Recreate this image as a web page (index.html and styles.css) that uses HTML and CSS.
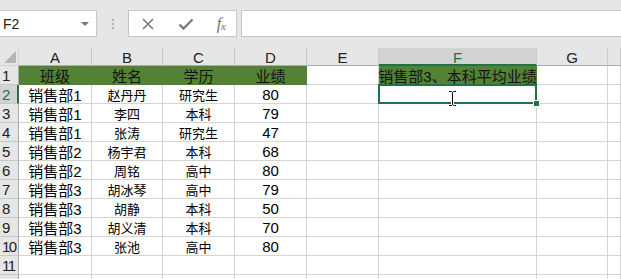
FILE: index.html
```html
<!DOCTYPE html>
<html>
  <head>
    <title>Sheet1</title>
    <meta charset="utf-8">
    <link rel="stylesheet" href="styles.css">
  </head>
  <body>
    <div class="formula-bar">
      <div class="name-box">
        <span>F2</span>
        <span class="caret"></span>
      </div>
      <div class="grip"><i></i><i></i><i></i></div>
      <div class="fx-buttons">
        <svg class="btn" width="14" height="14" viewBox="0 0 14 14">
          <path d="M2 2 L12 12 M12 2 L2 12" stroke="#7b7b7b" stroke-width="1.6" fill="none"/>
        </svg>
        <svg class="btn" width="16" height="14" viewBox="0 0 16 14">
          <path d="M1.5 7.5 L5.5 11.5 L14.5 2.5" stroke="#7b7b7b" stroke-width="2.4" fill="none"/>
        </svg>
        <span class="btn fx">f<sub>x</sub></span>
      </div>
      <div class="formula-input"></div>
    </div>

    <div class="sheet">
      <div class="corner"><span class="tri"></span></div>
      <div class="ch">A</div>
      <div class="ch">B</div>
      <div class="ch">C</div>
      <div class="ch">D</div>
      <div class="ch">E</div>
      <div class="ch active">F</div>
      <div class="ch">G</div>
      <div class="ch"></div>

      <div class="rh">1</div>
      <div class="c hd">班级</div>
      <div class="c hd">姓名</div>
      <div class="c hd">学历</div>
      <div class="c hd">业绩</div>
      <div class="c"></div>
      <div class="c hd">销售部3、本科平均业绩</div>
      <div class="c"></div>
      <div class="c"></div>

      <div class="rh active">2</div>
      <div class="c big">销售部1</div>
      <div class="c sm">赵丹丹</div>
      <div class="c sm">研究生</div>
      <div class="c big">80</div>
      <div class="c"></div>
      <div class="c selected">
        <svg class="ibeam" width="9" height="17" viewBox="0 0 9 17">
          <path d="M1 1.5 H3.5 L4.5 2.5 L5.5 1.5 H8 M4.5 2.5 V14.5 M1 15.5 H3.5 L4.5 14.5 L5.5 15.5 H8" stroke="#fff" stroke-width="3" fill="none"/>
          <path d="M1 1.5 H3.5 L4.5 2.5 L5.5 1.5 H8 M4.5 2.5 V14.5 M1 15.5 H3.5 L4.5 14.5 L5.5 15.5 H8" stroke="#000" stroke-width="1" fill="none"/>
        </svg>
        <span class="handle"></span>
      </div>
      <div class="c"></div>
      <div class="c"></div>

      <div class="rh">3</div>
      <div class="c big">销售部1</div>
      <div class="c sm">李四</div>
      <div class="c sm">本科</div>
      <div class="c big">79</div>
      <div class="c"></div><div class="c"></div><div class="c"></div><div class="c"></div>

      <div class="rh">4</div>
      <div class="c big">销售部1</div>
      <div class="c sm">张涛</div>
      <div class="c sm">研究生</div>
      <div class="c big">47</div>
      <div class="c"></div><div class="c"></div><div class="c"></div><div class="c"></div>

      <div class="rh">5</div>
      <div class="c big">销售部2</div>
      <div class="c sm">杨宇君</div>
      <div class="c sm">本科</div>
      <div class="c big">68</div>
      <div class="c"></div><div class="c"></div><div class="c"></div><div class="c"></div>

      <div class="rh">6</div>
      <div class="c big">销售部2</div>
      <div class="c sm">周铭</div>
      <div class="c sm">高中</div>
      <div class="c big">80</div>
      <div class="c"></div><div class="c"></div><div class="c"></div><div class="c"></div>

      <div class="rh">7</div>
      <div class="c big">销售部3</div>
      <div class="c sm">胡冰琴</div>
      <div class="c sm">高中</div>
      <div class="c big">79</div>
      <div class="c"></div><div class="c"></div><div class="c"></div><div class="c"></div>

      <div class="rh">8</div>
      <div class="c big">销售部3</div>
      <div class="c sm">胡静</div>
      <div class="c sm">本科</div>
      <div class="c big">50</div>
      <div class="c"></div><div class="c"></div><div class="c"></div><div class="c"></div>

      <div class="rh">9</div>
      <div class="c big">销售部3</div>
      <div class="c sm">胡义清</div>
      <div class="c sm">本科</div>
      <div class="c big">70</div>
      <div class="c"></div><div class="c"></div><div class="c"></div><div class="c"></div>

      <div class="rh">10</div>
      <div class="c big">销售部3</div>
      <div class="c sm">张池</div>
      <div class="c sm">高中</div>
      <div class="c big">80</div>
      <div class="c"></div><div class="c"></div><div class="c"></div><div class="c"></div>

      <div class="rh">11</div>
      <div class="c"></div><div class="c"></div><div class="c"></div><div class="c"></div>
      <div class="c"></div><div class="c"></div><div class="c"></div><div class="c"></div>

      <div class="rh"></div>
      <div class="c"></div><div class="c"></div><div class="c"></div><div class="c"></div>
      <div class="c"></div><div class="c"></div><div class="c"></div><div class="c"></div>
    </div>
  </body>
</html>
```

FILE: styles.css
```css
html, body {
  margin: 0;
  padding: 0;
  height: 279px;
  overflow: hidden;
  background-color: #fff;
  font-family: "Liberation Sans", "Noto Sans CJK SC", sans-serif;
  color: #000;
}

/* formula bar */
.formula-bar {
  height: 48px;
  background-color: #e6e6e6;
  display: flex;
  align-items: flex-start;
  padding-top: 10px;
  box-sizing: border-box;
}

.name-box {
  width: 97px;
  height: 27px;
  box-sizing: border-box;
  background-color: #fff;
  border: 1px solid #c6c6c6;
  border-left: none;
  display: flex;
  align-items: center;
  justify-content: space-between;
  padding: 0 7px 0 3px;
  font-size: 14px;
  color: #222;
}

.caret {
  width: 0;
  height: 0;
  border-left: 4px solid transparent;
  border-right: 4px solid transparent;
  border-top: 4px solid #777;
}

.grip {
  width: 31px;
  height: 27px;
  display: flex;
  flex-direction: column;
  align-items: center;
  justify-content: center;
  gap: 2px;
}

.grip i {
  width: 2px;
  height: 2px;
  background-color: #b4b4b4;
}

.fx-buttons {
  width: 109px;
  height: 27px;
  box-sizing: border-box;
  background-color: #fff;
  border: 1px solid #c6c6c6;
  display: flex;
  align-items: center;
  justify-content: space-between;
  padding: 0 10px 0 12px;
}

.fx {
  font-family: "Liberation Serif", serif;
  font-style: italic;
  font-size: 16px;
  color: #6f6f6f;
  line-height: 1;
}

.fx sub {
  font-size: 11px;
  vertical-align: -1px;
}

.formula-input {
  flex: 1;
  height: 27px;
  box-sizing: border-box;
  margin-left: 4px;
  background-color: #fff;
  border: 1px solid #c6c6c6;
  border-right: none;
}

/* grid */
.sheet {
  display: grid;
  grid-template-columns: 19px 73px 71px 72px 72px 72px 158px 71px 1fr;
  grid-template-rows: 18px;
  grid-auto-rows: 19px;
}

.sheet > div {
  box-sizing: border-box;
  border-right: 1px solid #d4d4d4;
  border-bottom: 1px solid #d4d4d4;
  white-space: nowrap;
  display: flex;
  align-items: center;
  justify-content: center;
}

.corner {
  background-color: #e6e6e6;
  position: relative;
}

.corner .tri {
  position: absolute;
  right: 2px;
  bottom: 2px;
  width: 0;
  height: 0;
  border-left: 12px solid transparent;
  border-bottom: 12px solid #b4b4b4;
}

.sheet .ch {
  background-color: #e6e6e6;
  border-right-color: #c8c8c8;
  border-bottom-color: #ababab;
  font-size: 15px;
  color: #222;
  padding-top: 2px;
}

.sheet .ch.active {
  background-color: #d2d2d2;
  border-bottom: 2px solid #217346;
  color: #217346;
}

.sheet .rh {
  background-color: #e6e6e6;
  border-right-color: #ababab;
  border-bottom-color: #c8c8c8;
  justify-content: flex-start;
  padding-left: 2px;
  font-size: 15px;
  letter-spacing: -1.5px;
  color: #222;
  overflow: hidden;
}

.sheet .rh.active {
  background-color: #d2d2d2;
  border-right: 2px solid #217346;
  color: #217346;
}

.c {
  overflow: visible;
}

.big {
  font-size: 15px;
}

.sm {
  font-size: 13px;
}

.sheet .hd {
  background-color: #548235;
  border-color: #548235;
  font-size: 15px;
  color: #111;
}

.sheet .selected {
  position: relative;
}

.selected::after {
  content: "";
  position: absolute;
  left: -1px;
  top: -1px;
  right: -1px;
  bottom: -1px;
  border: 2px solid #217346;
}

.ibeam {
  position: absolute;
  left: 69px;
  top: 5px;
  z-index: 2;
}

.handle {
  position: absolute;
  right: -4px;
  bottom: -4px;
  width: 5px;
  height: 5px;
  background-color: #217346;
  border: 1px solid #fff;
  z-index: 2;
}
```
